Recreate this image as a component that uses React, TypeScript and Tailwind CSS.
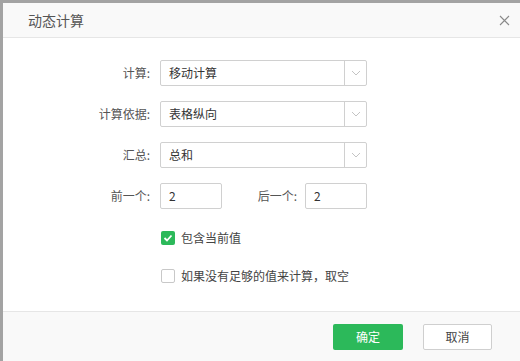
const FONT = { fontFamily: '"Noto Sans CJK SC", "Noto Sans", sans-serif' };

function Chevron() {
  return (
    <svg width="10" height="6" viewBox="0 0 10 6" fill="none">
      <path d="M1 1l4 4 4-4" stroke="#c4c4c4" strokeWidth="1" />
    </svg>
  );
}

function Select({ value }: { value: string }) {
  return (
    <div className="flex h-[26px] w-[207px] rounded-[2px] border border-[#d0d0d0] bg-white">
      <div className="flex flex-1 items-center pl-[8px] text-[12px] text-[#333]">{value}</div>
      <div className="flex w-[22px] items-center justify-center border-l border-[#d0d0d0]">
        <Chevron />
      </div>
    </div>
  );
}

function Row({ label, children }: { label: string; children: React.ReactNode }) {
  return (
    <div className="flex items-center">
      <div className="w-[157px] pr-[10px] text-right text-[12px] text-[#555]">{label}</div>
      {children}
    </div>
  );
}

function NumberBox({ value }: { value: string }) {
  return (
    <div className="flex h-[26px] w-[62px] items-center rounded-[2px] border border-[#d0d0d0] pl-[8px] text-[12px] text-[#333]">
      {value}
    </div>
  );
}

export default function App() {
  return (
    <div className="h-[361px] w-[520px] overflow-hidden bg-[#a3a3a3] pl-[3px] pt-[3px]" style={FONT}>
      <div className="flex h-[358px] w-[517px] flex-col bg-white">
        <div className="flex h-[35px] items-center justify-between border-b border-[#e6e6e6] bg-[#f9f9f9] pl-[25px] pr-[10px]">
          <span className="text-[14px] text-[#555]">动态计算</span>
          <svg width="11" height="11" viewBox="0 0 11 11">
            <path d="M1 1l9 9M10 1l-9 9" stroke="#8a8a8a" strokeWidth="1.1" />
          </svg>
        </div>

        <div className="flex flex-1 flex-col pt-[22px]">
          <div className="flex flex-col gap-[15px]">
            <Row label="计算:">
              <Select value="移动计算" />
            </Row>
            <Row label="计算依据:">
              <Select value="表格纵向" />
            </Row>
            <Row label="汇总:">
              <Select value="总和" />
            </Row>
            <Row label="前一个:">
              <NumberBox value="2" />
              <div className="w-[83px] pr-[8px] text-right text-[12px] text-[#555]">后一个:</div>
              <NumberBox value="2" />
            </Row>
          </div>

          <div className="mt-[20px] flex items-center pl-[158px]">
            <div className="flex h-[14px] w-[14px] items-center justify-center rounded-[2px] bg-[#2cb95a]">
              <svg width="10" height="8" viewBox="0 0 10 8" fill="none">
                <path d="M1.5 4l2.5 2.5L8.5 1.5" stroke="white" strokeWidth="1.8" />
              </svg>
            </div>
            <span className="ml-[6px] text-[12px] text-[#444]">包含当前值</span>
          </div>

          <div className="mt-[20px] flex items-center pl-[158px]">
            <div className="h-[14px] w-[14px] rounded-[2px] border border-[#c8c8c8] bg-white" />
            <span className="ml-[6px] text-[12px] text-[#444]">如果没有足够的值来计算，取空</span>
          </div>
        </div>

        <div className="flex h-[50px] items-center justify-end gap-[20px] border-t border-[#e6e6e6] bg-[#f9f9f9] pr-[28px]">
          <button className="h-[26px] w-[70px] rounded-[2px] bg-[#2cb95a] text-[12px] text-white">确定</button>
          <button className="h-[26px] w-[69px] rounded-[2px] border border-[#cfcfcf] bg-white text-[12px] text-[#444]">
            取消
          </button>
        </div>
      </div>
    </div>
  );
}
